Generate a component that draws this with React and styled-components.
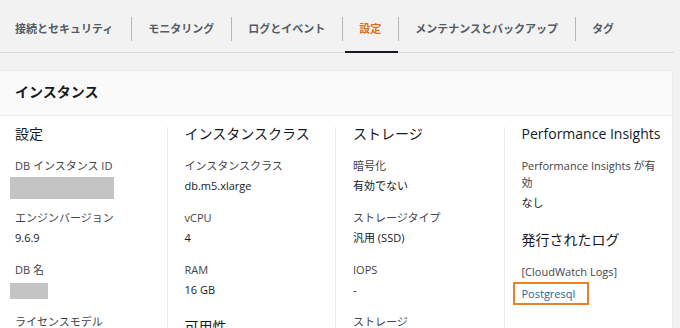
import React from "react";
import styled, { createGlobalStyle } from "styled-components";

const GlobalStyle = createGlobalStyle`
  body {
    margin: 0;
    background: #f2f2f2;
    font-family: "Open Sans", "Noto Sans CJK JP", sans-serif;
    overflow: hidden;
  }
`;

const TABS = [
  "接続とセキュリティ",
  "モニタリング",
  "ログとイベント",
  "設定",
  "メンテナンスとバックアップ",
  "タグ",
];

const COLUMNS = [
  [
    {
      title: "設定",
      items: [
        { label: "DB インスタンス ID", redact: { w: 104, h: 22, top: 0, bottom: -5 } },
        { label: "エンジンバージョン", value: "9.6.9" },
        { label: "DB 名", redact: { w: 38, h: 16, top: 2, bottom: -1 } },
        { label: "ライセンスモデル" },
      ],
    },
  ],
  [
    {
      title: "インスタンスクラス",
      items: [
        { label: "インスタンスクラス", value: "db.m5.xlarge" },
        { label: "vCPU", value: "4" },
        { label: "RAM", value: "16 GB" },
      ],
    },
    { title: "可用性", items: [] },
  ],
  [
    {
      title: "ストレージ",
      items: [
        { label: "暗号化", value: "有効でない" },
        { label: "ストレージタイプ", value: "汎用 (SSD)" },
        { label: "IOPS", value: "-" },
        { label: "ストレージ" },
      ],
    },
  ],
  [
    {
      title: "Performance Insights",
      items: [{ label: "Performance Insights が有効", value: "なし" }],
    },
    {
      title: "発行されたログ",
      items: [{ label: "[CloudWatch Logs]", link: "Postgresql" }],
    },
  ],
];

function App() {
  return (
    <>
      <GlobalStyle />
      <Page>
        <TabList>
          {TABS.map((t, i) => (
            <Tab key={t} $active={i === 3}>
              <TabLabel $last={i === TABS.length - 1}>{t}</TabLabel>
            </Tab>
          ))}
        </TabList>
        <Card>
          <CardHeader>インスタンス</CardHeader>
          <CardBody>
            {COLUMNS.map((sections, ci) => (
              <Column key={ci} $first={ci === 0}>
                {sections.map((s) => (
                  <Section key={s.title}>
                    <Heading>{s.title}</Heading>
                    {s.items.map((it) => (
                      <Pair key={it.label}>
                        <Label $narrow={ci === 3}>{it.label}</Label>
                        {it.value && <Value>{it.value}</Value>}
                        {it.redact && (
                          <Redact
                            $w={it.redact.w}
                            $h={it.redact.h}
                            $top={it.redact.top}
                            $bottom={it.redact.bottom}
                          />
                        )}
                        {it.link && (
                          <Value>
                            <Highlight>
                              <Link href="#">{it.link}</Link>
                            </Highlight>
                          </Value>
                        )}
                      </Pair>
                    ))}
                  </Section>
                ))}
              </Column>
            ))}
          </CardBody>
        </Card>
      </Page>
    </>
  );
}

const Page = styled.div`
  width: 676px;
  margin-left: -2px;
`;

const TabList = styled.div`
  display: flex;
  border-bottom: 1px solid #d9d9d9;
`;

const Tab = styled.div`
  position: relative;
  padding: 17px 0 11px;
  font-size: 11px;
  font-weight: 700;
  color: ${(p) => (p.$active ? "#d86f1e" : "#545b64")};

  &::after {
    content: "";
    display: ${(p) => (p.$active ? "block" : "none")};
    position: absolute;
    left: 2px;
    right: 1px;
    bottom: -1px;
    height: 2px;
    background: #16191f;
  }
`;

const TabLabel = styled.div`
  line-height: 24px;
  padding: 0 17px 0 16px;
  border-right: ${(p) => (p.$last ? "none" : "1px solid #b4b8bc")};

  ${Tab}:first-child & {
    padding-left: 17px;
    padding-right: 18px;
  }
`;

const Card = styled.div`
  margin: 17px 1px 0 0;
  background: #fff;
  border: 1px solid #eaeded;
  border-left: none;
`;

const CardHeader = styled.div`
  background: #fafafa;
  border-bottom: 1px solid #eeeeee;
  padding: 11px 17px 13px;
  font-size: 14px;
  line-height: 20px;
  font-weight: 700;
  color: #16191f;
`;

const CardBody = styled.div`
  display: grid;
  grid-template-columns: repeat(4, 1fr);
  padding-top: 11px;
  min-height: 220px;
`;

const Column = styled.div`
  padding: 0 8px 0 17px;
  border-left: ${(p) => (p.$first ? "none" : "1px solid #eaeded")};
`;

const Section = styled.div`
  & + & {
    margin-top: 22px;
  }
`;

const Heading = styled.div`
  font-size: 14px;
  line-height: 14px;
  color: #16191f;
  margin-bottom: 16px;
  white-space: nowrap;
`;

const Pair = styled.div`
  font-size: 11px;
  line-height: 17px;

  & + & {
    margin-top: 15px;
  }
`;

const Label = styled.div`
  color: #3f444a;
  max-width: ${(p) => (p.$narrow ? "142px" : "none")};
`;

const Value = styled.div`
  color: #16191f;
  margin-top: 3px;
`;

const Redact = styled.div`
  width: ${(p) => p.$w}px;
  height: ${(p) => p.$h}px;
  margin: ${(p) => 3 + p.$top}px 0 ${(p) => p.$bottom}px -5px;
  background: #c4c4c4;
`;

const Highlight = styled.span`
  display: inline-block;
  margin: -1px 0 -5px -9px;
  padding: 1px 12px 1px 7px;
  border: 2px solid #e5822f;
`;

const Link = styled.a`
  color: #0f6aa8;
  text-decoration: none;
`;

export default App;
